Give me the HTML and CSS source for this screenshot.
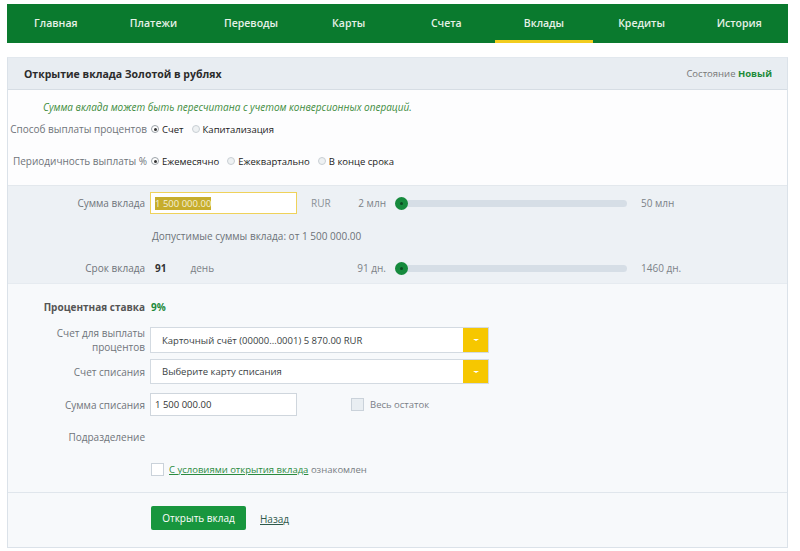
FILE: index.html
```html
<!DOCTYPE html>
<html lang="ru">
<head>
<meta charset="utf-8">
<link rel="stylesheet" href="styles.css">
</head>
<body>
<div class="page">
  <nav class="nav">
    <a class="nav-item">Главная</a>
    <a class="nav-item">Платежи</a>
    <a class="nav-item">Переводы</a>
    <a class="nav-item">Карты</a>
    <a class="nav-item">Счета</a>
    <a class="nav-item active">Вклады</a>
    <a class="nav-item">Кредиты</a>
    <a class="nav-item">История</a>
  </nav>

  <div class="panel">
    <div class="panel-head">
      <span class="title">Открытие вклада Золотой в рублях</span>
      <span class="state">Состояние <b>Новый</b></span>
    </div>

    <div class="sec sec-top">
      <div class="note">Сумма вклада может быть пересчитана с учетом конверсионных операций.</div>
      <div class="row row-radio r1">
        <span class="lbl">Способ выплаты процентов</span>
        <span class="radio on"></span><span class="opt">Счет</span>
        <span class="radio"></span><span class="opt">Капитализация</span>
      </div>
      <div class="row row-radio r2">
        <span class="lbl">Периодичность выплаты %</span>
        <span class="radio on"></span><span class="opt">Ежемесячно</span>
        <span class="radio"></span><span class="opt">Ежеквартально</span>
        <span class="radio"></span><span class="opt">В конце срока</span>
      </div>
    </div>

    <div class="sec sec-slide">
      <div class="row srow">
        <span class="lbl">Сумма вклада</span>
        <div class="field">
          <span class="inp inp-focus"><span class="sel">1 500 000.00</span></span>
          <span class="cur">RUR</span>
        </div>
        <span class="minv">2 млн</span>
        <div class="slider"><span class="thumb"></span></div>
        <span class="maxv">50 млн</span>
      </div>
      <div class="row hint">Допустимые суммы вклада: от 1 500 000.00</div>
      <div class="row srow">
        <span class="lbl">Срок вклада</span>
        <div class="field">
          <span class="days">91</span>
          <span class="unit">день</span>
        </div>
        <span class="minv">91 дн.</span>
        <div class="slider"><span class="thumb"></span></div>
        <span class="maxv">1460 дн.</span>
      </div>
    </div>

    <div class="sec sec-form">
      <div class="row rate">
        <span class="lbl strong">Процентная ставка</span>
        <span class="pct">9%</span>
      </div>
      <div class="row sel-row s1">
        <span class="lbl two">Счет для выплаты<br>процентов</span>
        <div class="select"><span class="select-text">Карточный счёт (00000...0001) 5 870.00 RUR</span><span class="select-btn"><span class="caret"></span></span></div>
      </div>
      <div class="row sel-row s2">
        <span class="lbl">Счет списания</span>
        <div class="select"><span class="select-text">Выберите карту списания</span><span class="select-btn"><span class="caret"></span></span></div>
      </div>
      <div class="row sum-row">
        <span class="lbl">Сумма списания</span>
        <span class="inp">1 500 000.00</span>
        <span class="chk gray"></span><span class="chk-text">Весь остаток</span>
      </div>
      <div class="row div-row">
        <span class="lbl">Подразделение</span>
      </div>
      <div class="row agree">
        <span class="chk white"></span>
        <span><a class="link">С условиями открытия вклада</a> <span class="muted">ознакомлен</span></span>
      </div>
    </div>

    <div class="panel-foot">
      <button class="btn">Открыть вклад</button>
      <a class="back">Назад</a>
    </div>
  </div>
</div>
</body>
</html>
```

FILE: styles.css
```css
* { box-sizing: border-box; }
html, body { margin: 0; padding: 0; background: #ffffff; }
body {
  font-family: "Open Sans", "Liberation Sans", sans-serif;
  font-size: 10px;
  color: #333;
}
.page {
  width: 781px;
  margin-left: 7px;
  padding-top: 4px;
}

/* nav */
.nav {
  display: grid;
  grid-template-columns: repeat(8, 1fr);
  height: 39px;
  background: #0a7a2e;
}
.nav-item {
  display: flex;
  align-items: center;
  justify-content: center;
  color: #e6f1e7;
  font-size: 10.5px;
  font-weight: 600;
  border-bottom: 3px solid transparent;
  padding-top: 2px;
}
.nav-item.active { border-bottom-color: #f2cd1f; }

/* panel */
.panel {
  margin-top: 14px;
  border: 1px solid #dbe2e9;
  border-top-color: #e2e8ee;
}
.panel-head {
  height: 32px;
  background: #e8edf2;
  border-bottom: 1px solid #d6dde4;
  display: flex;
  align-items: center;
  justify-content: space-between;
  padding: 0 15px 0 16px;
}
.title { font-weight: 700; font-size: 10.5px; color: #2b2b2b; }
.state { color: #777; font-size: 9.5px; }
.state b { color: #1d8a3a; font-weight: 700; }

.sec { display: flex; flex-direction: column; }
.row { display: flex; align-items: center; }
.lbl {
  width: 137px;
  text-align: right;
  color: #6f747a;
  flex: none;
  margin-right: 5px;
}
.strong { font-weight: 700; color: #555; }

.sec-top {
  background: #fdfdfe;
  height: 95px;
  padding-top: 10px;
}
.note {
  height: 14px;
  line-height: 14px;
  font-style: italic;
  color: #3d8c3d;
  font-size: 10px;
  padding-left: 35px;
}
.row-radio { height: 22px; }
.r1 { margin-top: 4px; }
.r2 { margin-top: 10px; }
.row-radio .lbl { width: 139px; margin-right: 4px; }
.radio {
  width: 8px; height: 8px;
  border-radius: 50%;
  border: 1px solid #c9cfd4;
  background: #eef1f3;
  flex: none;
  margin-right: 3px;
  margin-left: 8px;
  position: relative;
}
.row-radio .lbl + .radio { margin-left: 0; }
.radio.on { background: #fff; border-color: #9aa1a7; }
.radio.on::after {
  content: "";
  position: absolute;
  left: 1.5px; top: 1.5px;
  width: 3px; height: 3px;
  border-radius: 50%;
  background: #333;
}
.opt { color: #222; font-size: 9.5px; }

/* slider section */
.sec-slide {
  background: #edf1f5;
  border-top: 1px solid #e3e8ed;
  border-bottom: 1px solid #e6ebf0;
  height: 99px;
  padding-top: 6px;
}
.srow { height: 22px; }
.field {
  width: 180px;
  display: flex;
  align-items: center;
  flex: none;
}
.inp {
  width: 147px;
  height: 22px;
  background: #fff;
  border: 1px solid #cfd6dd;
  display: flex;
  align-items: center;
  padding-left: 4px;
  color: #333;
  font-size: 9.5px;
  flex: none;
}
.inp-focus { border-color: #efd25a; }
.sel { background: #c7ad2c; color: #f4f0d8; }
.cur { margin-left: 14px; color: #8a9097; }
.days { font-weight: 700; color: #333; margin-left: 5px; }
.unit { margin-left: 24px; color: #7a8086; }
.minv {
  width: 56px;
  text-align: right;
  color: #7c8288;
  flex: none;
}
.slider {
  margin-left: 9px;
  width: 232px;
  height: 7px;
  border-radius: 4px;
  background: #d6dee6;
  position: relative;
  flex: none;
}
.thumb {
  position: absolute;
  left: 0; top: -3px;
  width: 13px; height: 13px;
  border-radius: 50%;
  background: #168a3d;
}
.thumb::after {
  content: "";
  position: absolute;
  left: 5px; top: 5px;
  width: 3px; height: 3px;
  border-radius: 50%;
  background: #0b4a22;
}
.maxv { margin-left: 14px; color: #7c8288; }
.hint {
  height: 14px;
  margin-top: 15px;
  margin-bottom: 14px;
  padding-left: 144px;
  color: #6c7278;
}

/* form section */
.sec-form {
  background: #f7f9fb;
  height: 208px;
  padding-top: 16px;
}
.rate { height: 14px; }
.pct { color: #1d8a3a; font-weight: 700; margin-left: 1px; }
.sel-row .select {
  width: 339px;
  background: #fff;
  border: 1px solid #d3dae1;
  display: flex;
  align-items: stretch;
}
.s1 { margin-top: 12px; }
.s1 .select { height: 26px; }
.s2 { margin-top: 5px; }
.s2 .select { height: 25px; }
.two { line-height: 14px; }
.select-text {
  flex: 1;
  display: flex;
  align-items: center;
  padding-left: 11px;
  color: #3a3f44;
  font-size: 9.5px;
}
.select-btn {
  width: 25px;
  background: #f6c700;
  display: flex;
  align-items: center;
  justify-content: center;
}
.caret {
  width: 0; height: 0;
  border-left: 3px solid transparent;
  border-right: 3px solid transparent;
  border-top: 2px solid #fff;
}
.sum-row { margin-top: 9px; height: 23px; }
.sum-row .inp { height: 23px; }
.chk {
  width: 13px; height: 13px;
  border: 1px solid #cad2da;
  flex: none;
}
.chk.gray { background: #e9eef2; margin-left: 54px; }
.chk-text { margin-left: 6px; color: #7a8087; font-size: 9.5px; }
.div-row { height: 14px; margin-top: 14px; }
.agree { height: 16px; margin-top: 17px; padding-left: 143px; font-size: 9.5px; }
.chk.white { background: #fff; margin-right: 5px; }
.link { color: #2b8b3f; text-decoration: underline; }
.muted { color: #777d83; }

.panel-foot {
  background: #f7f9fb;
  border-top: 1px solid #e0e6ec;
  height: 55px;
  display: flex;
  align-items: flex-start;
  padding: 13px 0 0 143px;
}
.btn {
  width: 95px;
  height: 24px;
  background: #18963e;
  color: #fff;
  border: none;
  border-radius: 2px;
  font-family: inherit;
  font-size: 10px;
  padding: 0;
}
.back {
  margin-left: 14px;
  margin-top: 6px;
  color: #2f5a4c;
  text-decoration: underline;
}
```
